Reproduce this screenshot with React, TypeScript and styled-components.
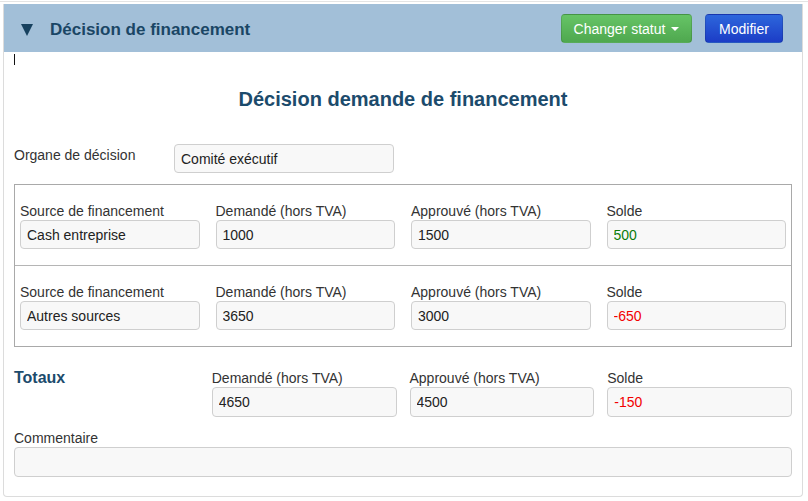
import styled, { createGlobalStyle } from 'styled-components';

const SOURCES = [
  { source: 'Cash entreprise', requested: '1000', approved: '1500', balance: '500' },
  { source: 'Autres sources', requested: '3650', approved: '3000', balance: '-650' },
];

const TOTALS = { requested: '4650', approved: '4500', balance: '-150' };

const balanceTone = (value: string) => (value.startsWith('-') ? 'negative' : 'positive');

const App = () => {
  return (
    <Page>
      <GlobalStyle />
      <TopRule />
      <Panel>
        <PanelHeader>
          <Toggle />
          <HeaderTitle>Décision de financement</HeaderTitle>
          <Actions>
            <Button $variant="success">
              Changer statut <DropCaret />
            </Button>
            <Button $variant="primary">Modifier</Button>
          </Actions>
        </PanelHeader>

        <PanelBody>
          <TextCursor />
          <Title>Décision demande de financement</Title>

          <OrganRow>
            <OrganLabel>Organe de décision</OrganLabel>
            <Field $width="220px" readOnly value="Comité exécutif" />
          </OrganRow>

          <SourceBox>
            {SOURCES.map(row => (
              <SourceRow key={row.source}>
                <Column>
                  <Label>Source de financement</Label>
                  <Field readOnly value={row.source} />
                </Column>
                <Column>
                  <Label>Demandé (hors TVA)</Label>
                  <Field readOnly value={row.requested} />
                </Column>
                <Column>
                  <Label>Approuvé (hors TVA)</Label>
                  <Field readOnly value={row.approved} />
                </Column>
                <Column>
                  <Label>Solde</Label>
                  <Field readOnly value={row.balance} $tone={balanceTone(row.balance)} />
                </Column>
              </SourceRow>
            ))}
          </SourceBox>

          <TotalsRow>
            <TotalsTitle>Totaux</TotalsTitle>
            <Column>
              <Label>Demandé (hors TVA)</Label>
              <Field $height="30px" readOnly value={TOTALS.requested} />
            </Column>
            <Column>
              <Label>Approuvé (hors TVA)</Label>
              <Field $height="30px" readOnly value={TOTALS.approved} />
            </Column>
            <Column>
              <Label>Solde</Label>
              <Field $height="30px" readOnly value={TOTALS.balance} $tone={balanceTone(TOTALS.balance)} />
            </Column>
          </TotalsRow>

          <CommentBlock>
            <Label>Commentaire</Label>
            <Field $height="30px" readOnly value="" />
          </CommentBlock>
        </PanelBody>
      </Panel>
    </Page>
  );
};

export default App;

const GlobalStyle = createGlobalStyle`
  body {
    margin: 0;
    background: #fff;
    font-family: 'Liberation Sans', Arial, sans-serif;
    color: #333;
  }
`;

const Page = styled.div`
  padding-top: 1px;
`;

const TopRule = styled.div`
  height: 1px;
  background: #e4e4e4;
  margin-bottom: 2px;
`;

const Panel = styled.div`
  margin: 0 5px 0 3px;
  border: 1px solid #dcdcdc;
  border-top: none;
  border-radius: 0 0 4px 4px;
`;

const PanelHeader = styled.div`
  height: 48px;
  display: flex;
  align-items: center;
  padding: 0 19px 0 17px;
  background: #a2bfd8;
`;

const Toggle = styled.span`
  width: 0;
  height: 0;
  margin-top: 3px;
  border-left: 6px solid transparent;
  border-right: 6px solid transparent;
  border-top: 12px solid #17415f;
  margin-right: 17px;
`;

const HeaderTitle = styled.div`
  flex: 1;
  margin-top: 3px;
  font-size: 17px;
  font-weight: bold;
  color: #1a4665;
`;

const Actions = styled.div`
  display: flex;
  gap: 13px;
  margin-top: 1px;
`;

const Button = styled.div<{ $variant: 'success' | 'primary' }>`
  height: 29px;
  box-sizing: border-box;
  display: flex;
  align-items: center;
  gap: 4px;
  padding: 0 13px;
  border-radius: 4px;
  font-size: 14px;
  white-space: nowrap;
  color: #fff;
  border: 1px solid rgba(0, 0, 0, 0.12);
  background: ${({ $variant }) =>
    $variant === 'success'
      ? 'linear-gradient(#66c466, #4fa84f)'
      : 'linear-gradient(#2d66dc, #1c3dc6)'};
  width: ${({ $variant }) => ($variant === 'success' ? '131px' : '78px')};
  justify-content: center;
`;

const DropCaret = styled.span`
  width: 0;
  height: 0;
  border-left: 4px solid transparent;
  border-right: 4px solid transparent;
  border-top: 4px solid #fff;
  margin-left: 2px;
`;

const PanelBody = styled.div`
  padding: 0 10px 19px 10px;
`;

const TextCursor = styled.div`
  width: 1px;
  height: 11px;
  margin-top: 2px;
  background: #111;
`;

const Title = styled.h2`
  margin: 22px 0 0;
  text-align: center;
  font-size: 20px;
  line-height: 24px;
  font-weight: bold;
  color: #1c4b6c;
`;

const OrganRow = styled.div`
  margin-top: 33px;
  display: flex;
  align-items: flex-start;
`;

const OrganLabel = styled.div`
  width: 160px;
  margin-top: 1px;
  font-size: 14px;
  line-height: 20px;
`;

const Label = styled.div`
  font-size: 14px;
  line-height: 18px;
  color: #333;
  white-space: nowrap;
`;

const Field = styled.input<{ $width?: string; $height?: string; $tone?: 'positive' | 'negative' }>`
  display: block;
  box-sizing: border-box;
  width: ${({ $width }) => $width ?? '100%'};
  height: ${({ $height }) => $height ?? '29px'};
  margin: 0;
  padding: 0 6px;
  border: 1px solid #cfcfcf;
  border-radius: 4px;
  background: #f8f8f8;
  font-family: 'Liberation Sans', Arial, sans-serif;
  font-size: 14px;
  color: ${({ $tone }) =>
    $tone === 'negative' ? '#f20000' : $tone === 'positive' ? '#0a7d0a' : '#222'};
  outline: none;
`;

const SourceBox = styled.div`
  margin-top: 11px;
  border: 1px solid #a9a9a9;
`;

const SourceRow = styled.div`
  display: grid;
  grid-template-columns: repeat(4, 1fr);
  gap: 16px;
  padding: 17px 5px 16px 5px;

  & + & {
    border-top: 1px solid #b5b5b5;
  }
`;

const Column = styled.div`
  display: flex;
  flex-direction: column;
`;

const TotalsRow = styled.div`
  margin-top: 22px;
  display: grid;
  grid-template-columns: repeat(4, 1fr);
  gap: 13px;
`;

const TotalsTitle = styled.div`
  font-size: 16px;
  line-height: 18px;
  font-weight: bold;
  color: #1c4b6c;
`;

const CommentBlock = styled.div`
  margin-top: 12px;
  display: flex;
  flex-direction: column;
`;
